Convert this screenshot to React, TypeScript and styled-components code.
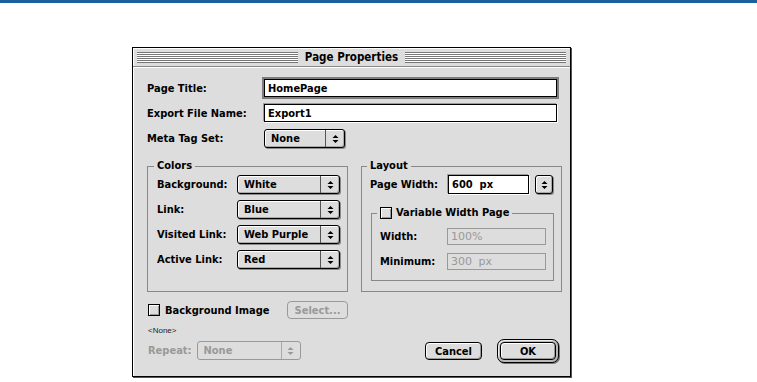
import { Fragment } from "react";
import styled, { createGlobalStyle } from "styled-components";

const GlobalStyle = createGlobalStyle`
  html, body {
    margin: 0;
    padding: 0;
    background: #fff;
  }
  body {
    font-family: "DejaVu Sans Condensed", "DejaVu Sans", sans-serif;
    font-stretch: condensed;
    font-weight: bold;
    font-size: 11px;
    color: #000;
  }
`;

const Page = styled.div`
  width: 757px;
  height: 382px;
  overflow: hidden;
  background: #fff;
`;

const TopBar = styled.div`
  height: 3px;
  background: #1b5f9f;
`;

const Window = styled.div`
  box-sizing: border-box;
  width: 439px;
  margin: 44px 0 0 132px;
  border: 1px solid #000;
  background: #dddddd;
  box-shadow: 1px 1px 0 #555;
`;

const TitleBar = styled.div`
  height: 18px;
  display: flex;
  align-items: center;
  padding: 0 4px;
  border-bottom: 1px solid #888;
  box-shadow: inset 1px 1px 0 #fff;
`;

const Stripes = styled.div`
  flex: 1;
  height: 11px;
  background: repeating-linear-gradient(to bottom, #777 0 1px, #fff 1px 2px);
`;

const Title = styled.div`
  padding: 0 7px;
  line-height: 18px;
  font-size: 11.5px;
  white-space: nowrap;
`;

const Body = styled.div`
  padding: 12px 8px 16px 14px;
  box-shadow: inset 1px 1px 0 #fff;
`;

const FormGrid = styled.div<{ $label: number; $gap: number }>`
  display: grid;
  grid-template-columns: ${(p) => p.$label}px auto;
  justify-content: start;
  row-gap: ${(p) => p.$gap}px;
  align-items: center;
`;

const Label = styled.span<{ $disabled?: boolean }>`
  white-space: nowrap;
  color: ${(p) => (p.$disabled ? "#999" : "#000")};
`;

const Field = styled.div<{
  $width: number;
  $height?: number;
  $focused?: boolean;
  $disabled?: boolean;
}>`
  box-sizing: border-box;
  width: ${(p) => p.$width}px;
  height: ${(p) => p.$height ?? 18}px;
  display: flex;
  align-items: center;
  padding: 0 3px;
  background: ${(p) => (p.$disabled ? "#dddddd" : "#fff")};
  border: 1px solid ${(p) => (p.$disabled ? "#999" : "#000")};
  box-shadow: ${(p) =>
    p.$focused
      ? "0 0 0 2px #7d7d7d"
      : p.$disabled
        ? "none"
        : "-1px -1px 0 #9a9a9a, 1px 1px 0 #fff"};
  white-space: nowrap;
`;

const DimValue = styled.span`
  font-family: "DejaVu Sans", sans-serif;
  font-stretch: normal;
  font-weight: normal;
  font-size: 11px;
  color: #999;
  word-spacing: 3px;
`;

const PopupBox = styled.div<{ $width: number; $disabled?: boolean }>`
  box-sizing: border-box;
  width: ${(p) => p.$width}px;
  height: 19px;
  display: flex;
  border: 1px solid ${(p) => (p.$disabled ? "#999" : "#000")};
  border-radius: 3px;
  background: #dddddd;
  color: ${(p) => (p.$disabled ? "#999" : "#000")};
  box-shadow: ${(p) =>
    p.$disabled
      ? "none"
      : "1px 1px 0 #8a8a8a, inset 1px 1px 0 #fff, inset -1px -1px 0 #aaa"};
`;

const PopupValue = styled.span`
  flex: 1;
  display: flex;
  align-items: center;
  padding-left: 6px;
  white-space: nowrap;
`;

const PopupArrow = styled.span<{ $disabled?: boolean }>`
  width: 18px;
  display: flex;
  align-items: center;
  justify-content: center;
  border-left: 1px solid ${(p) => (p.$disabled ? "#aaa" : "#555")};
`;

const Spinner = styled.div`
  box-sizing: border-box;
  width: 18px;
  height: 19px;
  margin-left: 6px;
  display: flex;
  align-items: center;
  justify-content: center;
  border: 1px solid #000;
  border-radius: 3px;
  background: #dddddd;
  box-shadow: 1px 1px 0 #8a8a8a, inset 1px 1px 0 #fff, inset -1px -1px 0 #aaa;
`;

const Groups = styled.div`
  display: grid;
  grid-template-columns: 201px 201px;
  column-gap: 13px;
  margin-top: 11px;
`;

const Group = styled.fieldset<{ $height: number; $pad: string }>`
  box-sizing: border-box;
  height: ${(p) => p.$height}px;
  min-width: 0;
  margin: 0;
  padding: ${(p) => p.$pad};
  border: 1px solid #888;
`;

const Legend = styled.legend`
  display: flex;
  align-items: center;
  gap: 4px;
  margin-left: -3px;
  padding: 0 3px;
  line-height: 14px;
`;

const Row = styled.div`
  display: flex;
  align-items: center;
`;

const RowLabel = styled(Label)<{ $width: number }>`
  width: ${(p) => p.$width}px;
`;

const InnerGroup = styled(Group)`
  margin: 12px 0 0 1px;
  width: 183px;
`;

const Box = styled.span<{ $disabled?: boolean }>`
  box-sizing: border-box;
  width: 12px;
  height: 12px;
  display: inline-block;
  border: 1px solid ${(p) => (p.$disabled ? "#999" : "#000")};
  background: #dddddd;
  box-shadow: inset 1px 1px 0 #fff, inset -1px -1px 0 #999;
`;

const Footer = styled.div`
  display: grid;
  grid-template-columns: 201px 1fr;
  margin-top: 9px;
`;

const LeftCol = styled.div`
  display: flex;
  flex-direction: column;
`;

const CheckRow = styled.div`
  height: 18px;
  display: flex;
  align-items: center;
  justify-content: space-between;
`;

const CheckLabel = styled.label`
  display: flex;
  align-items: center;
  gap: 5px;
  padding-left: 1px;
`;

const NoneText = styled.div`
  margin-top: 6px;
  padding-left: 1px;
  line-height: 11px;
  font-family: "Liberation Sans", Arial, sans-serif;
  font-weight: normal;
  font-size: 8px;
  color: #222;
`;

const RepeatRow = styled.div`
  margin-top: 5px;
  display: flex;
  align-items: center;
  gap: 5px;
  padding-left: 1px;
`;

const Actions = styled.div`
  align-self: end;
  justify-self: end;
  display: flex;
  align-items: center;
  gap: 15px;
  margin: 0 3px -3px 0;
`;

const Button = styled.button<{ $width: number; $disabled?: boolean }>`
  box-sizing: border-box;
  width: ${(p) => p.$width}px;
  height: 18px;
  padding: 0;
  font: inherit;
  font-stretch: condensed;
  color: ${(p) => (p.$disabled ? "#999" : "#000")};
  border: 1px solid ${(p) => (p.$disabled ? "#999" : "#000")};
  border-radius: 4px;
  background: #dddddd;
  box-shadow: ${(p) =>
    p.$disabled ? "none" : "inset 1px 1px 0 #fff, inset -1px -1px 0 #999"};
`;

const DefaultRing = styled.div`
  display: flex;
  padding: 2px;
  border: 1px solid #000;
  border-radius: 7px;
  background: #b9b9b9;
  box-shadow: inset 1px 1px 0 #eee, 1px 1px 0 #777;
`;

function Arrows({ disabled }: { disabled?: boolean }) {
  return (
    <svg width="7" height="10" viewBox="0 0 7 10">
      <path
        d="M3.5 1 L6.5 4 H0.5 Z M0.5 6 H6.5 L3.5 9 Z"
        fill={disabled ? "#999" : "#000"}
      />
    </svg>
  );
}

function Popup({
  value,
  width,
  disabled,
}: {
  value: string;
  width: number;
  disabled?: boolean;
}) {
  return (
    <PopupBox $width={width} $disabled={disabled}>
      <PopupValue>{value}</PopupValue>
      <PopupArrow $disabled={disabled}>
        <Arrows disabled={disabled} />
      </PopupArrow>
    </PopupBox>
  );
}

const colorRows = [
  { label: "Background:", value: "White" },
  { label: "Link:", value: "Blue" },
  { label: "Visited Link:", value: "Web Purple" },
  { label: "Active Link:", value: "Red" },
];

export default function App() {
  return (
    <Page>
      <GlobalStyle />
      <TopBar />
      <Window>
        <TitleBar>
          <Stripes />
          <Title>Page Properties</Title>
          <Stripes />
        </TitleBar>
        <Body>
          <FormGrid $label={117} $gap={7}>
            <Label>Page Title:</Label>
            <Field $width={293} $focused>
              HomePage
            </Field>
            <Label>Export File Name:</Label>
            <Field $width={293}>Export1</Field>
            <Label>Meta Tag Set:</Label>
            <Popup value="None" width={81} />
          </FormGrid>

          <Groups>
            <Group $height={133} $pad="2px 7px 0 9px">
              <Legend>Colors</Legend>
              <FormGrid $label={80} $gap={6}>
                {colorRows.map((r) => (
                  <Fragment key={r.label}>
                    <Label>{r.label}</Label>
                    <Popup value={r.value} width={103} />
                  </Fragment>
                ))}
              </FormGrid>
            </Group>

            <Group $height={133} $pad="2px 7px 0 8px">
              <Legend>Layout</Legend>
              <Row>
                <RowLabel $width={78}>Page Width:</RowLabel>
                <Field $width={81} $height={19}>
                  600&nbsp;&nbsp;px
                </Field>
                <Spinner>
                  <Arrows />
                </Spinner>
              </Row>
              <InnerGroup $height={75} $pad="8px 6px 0 8px">
                <Legend>
                  <Box />
                  Variable Width Page
                </Legend>
                <FormGrid $label={67} $gap={8}>
                  <Label>Width:</Label>
                  <Field $width={99} $height={17} $disabled>
                    <DimValue>100%</DimValue>
                  </Field>
                  <Label>Minimum:</Label>
                  <Field $width={99} $height={17} $disabled>
                    <DimValue>300 px</DimValue>
                  </Field>
                </FormGrid>
              </InnerGroup>
            </Group>
          </Groups>

          <Footer>
            <LeftCol>
              <CheckRow>
                <CheckLabel>
                  <Box />
                  Background Image
                </CheckLabel>
                <Button $width={61} $disabled>
                  Select...
                </Button>
              </CheckRow>
              <NoneText>&lt;None&gt;</NoneText>
              <RepeatRow>
                <Label $disabled>Repeat:</Label>
                <Popup value="None" width={104} disabled />
              </RepeatRow>
            </LeftCol>
            <Actions>
              <Button $width={57}>Cancel</Button>
              <DefaultRing>
                <Button $width={56}>OK</Button>
              </DefaultRing>
            </Actions>
          </Footer>
        </Body>
      </Window>
    </Page>
  );
}
